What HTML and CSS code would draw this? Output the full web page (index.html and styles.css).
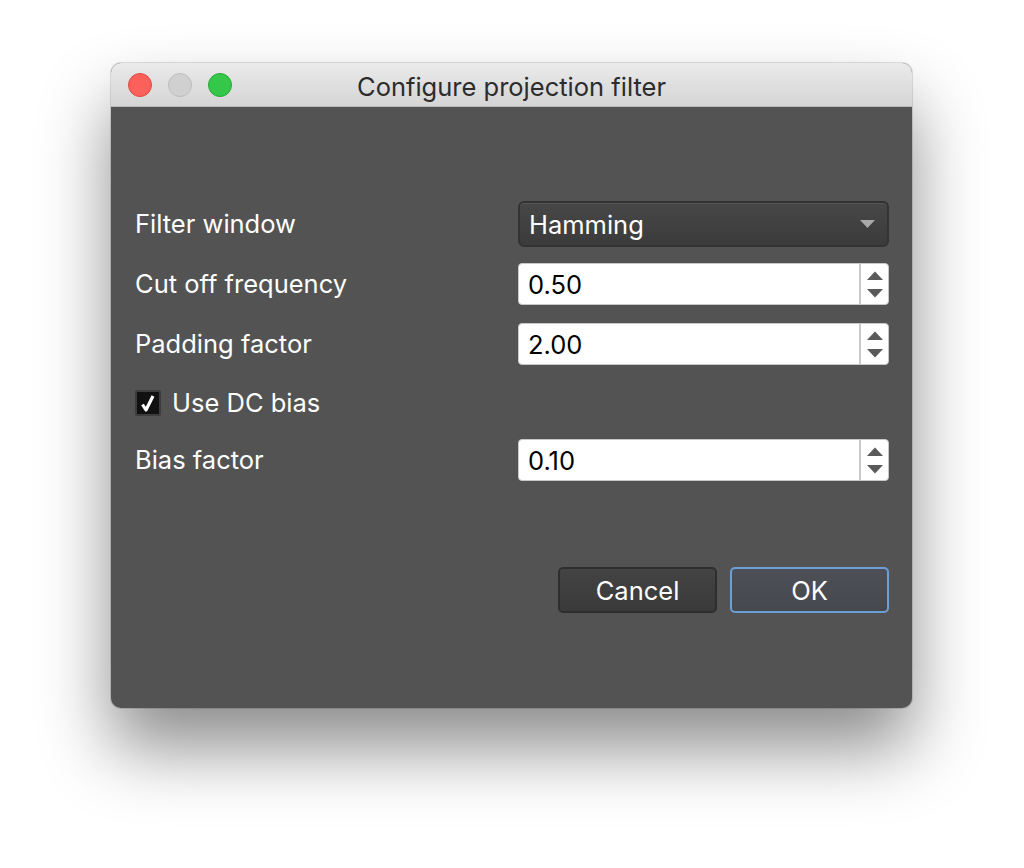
FILE: index.html
```html
<!DOCTYPE html>
<html>
<head>
<meta charset="utf-8">
<link rel="stylesheet" href="styles.css">
</head>
<body>
<div class="window">
  <div class="titlebar">
    <div class="lights">
      <span class="light red"></span>
      <span class="light gray"></span>
      <span class="light green"></span>
    </div>
    <div class="title">Configure projection filter</div>
  </div>
  <div class="content">
    <div class="form">
      <div class="label tall">Filter window</div>
      <div class="combo"><span>Hamming</span><svg class="caret" width="15" height="8" viewBox="0 0 15 8"><path d="M0 0 H15 L7.5 8 Z" fill="#a9a9a9"/></svg></div>

      <div class="label">Cut off frequency</div>
      <div class="spin"><span class="val">0.50</span><span class="arrows"><svg width="18" height="27" viewBox="0 0 18 27"><path d="M1 9 L9 0.5 L17 9 Z M1 18 H17 L9 26.5 Z" fill="#5a5a5a"/></svg></span></div>

      <div class="label">Padding factor</div>
      <div class="spin"><span class="val">2.00</span><span class="arrows"><svg width="18" height="27" viewBox="0 0 18 27"><path d="M1 9 L9 0.5 L17 9 Z M1 18 H17 L9 26.5 Z" fill="#5a5a5a"/></svg></span></div>

      <div class="check-row"><span class="box"><svg width="16" height="18" viewBox="0 0 16 18"><path d="M2.5 10.5 L6 16 L13 2" fill="none" stroke="#fff" stroke-width="3.2" stroke-linejoin="round"/></svg></span><span class="label">Use DC bias</span></div>

      <div class="label">Bias factor</div>
      <div class="spin"><span class="val">0.10</span><span class="arrows"><svg width="18" height="27" viewBox="0 0 18 27"><path d="M1 9 L9 0.5 L17 9 Z M1 18 H17 L9 26.5 Z" fill="#5a5a5a"/></svg></span></div>
    </div>
    <div class="buttons">
      <button class="btn">Cancel</button>
      <button class="btn default">OK</button>
    </div>
  </div>
</div>
</body>
</html>
```

FILE: styles.css
```css
html, body {
  margin: 0;
  padding: 0;
  background: #ffffff;
  width: 1024px;
  height: 868px;
  overflow: hidden;
}
body {
  font-family: "Inter", "Liberation Sans", sans-serif;
}
.window {
  margin: 63px 0 0 111px;
  width: 801px;
  height: 645px;
  border-radius: 10px;
  background: #535353;
  box-shadow: 0 40px 70px rgba(0,0,0,0.45), 0 0 0 1px rgba(0,0,0,0.12);
  display: flex;
  flex-direction: column;
  overflow: hidden;
}
.titlebar {
  height: 44px;
  background: linear-gradient(#ebeaeb, #d6d5d6);
  border-bottom: 1px solid #b9b8b9;
  box-sizing: border-box;
  display: flex;
  align-items: center;
  position: relative;
}
.lights {
  display: flex;
  gap: 16px;
  padding-left: 17px;
}
.light {
  width: 24px;
  height: 24px;
  border-radius: 50%;
  box-sizing: border-box;
}
.red { background: #fc605b; border: 1px solid #de4a45; }
.gray { background: #d0d0d0; border: 1px solid #bcbcbc; }
.green { background: #34c749; border: 1px solid #26a934; }
.title {
  position: absolute;
  left: 0;
  right: 0;
  top: 3px;
  bottom: 0;
  display: flex;
  align-items: center;
  justify-content: center;
  font-size: 25.5px;
  color: #2c2c2c;
}
.content {
  flex: 1;
  padding: 94px 23px 0 24px;
  display: flex;
  flex-direction: column;
}
.form {
  display: grid;
  grid-template-columns: 1fr 371px;
  grid-template-rows: 46px 58px 60px 51px 65px;
  align-items: end;
}
.label {
  color: #ffffff;
  font-size: 25.5px;
  line-height: 42px;
  height: 42px;
}
.label.tall {
  line-height: 46px;
  height: 46px;
}
.combo {
  height: 46px;
  box-sizing: border-box;
  border: 2px solid #333;
  border-radius: 6px;
  background: linear-gradient(#474747, #3b3b3b);
  box-shadow: inset 0 1px 0 rgba(255,255,255,0.08);
  display: flex;
  align-items: center;
  justify-content: space-between;
  padding: 0 12px 0 9px;
  color: #fff;
  font-size: 25.5px;
}
.spin {
  height: 42px;
  box-sizing: border-box;
  background: #fff;
  border: 1px solid #c8c8c8;
  border-radius: 4px;
  display: flex;
  align-items: center;
  font-size: 25.5px;
  color: #000;
}
.val {
  flex: 1;
  padding-left: 9px;
}
.arrows {
  width: 29px;
  height: 100%;
  border-left: 2px solid #c9c9c9;
  box-sizing: border-box;
  display: flex;
  align-items: center;
  justify-content: center;
}
.check-row {
  grid-column: 1 / 3;
  display: flex;
  align-items: center;
  gap: 11px;
  height: 26px;
}
.check-row .label {
  line-height: 26px;
  height: 26px;
}
.box {
  width: 26px;
  height: 26px;
  box-sizing: border-box;
  background: #111;
  border: 2px solid #3d3d3d;
  border-radius: 2px;
  display: flex;
  align-items: center;
  justify-content: center;
}
.buttons {
  margin-top: 86px;
  display: flex;
  justify-content: flex-end;
  gap: 13px;
}
.btn {
  width: 159px;
  height: 46px;
  box-sizing: border-box;
  border-radius: 5px;
  border: 2px solid #2e2e2e;
  background: linear-gradient(#434343, #3a3a3a);
  color: #fff;
  font-family: "Inter", "Liberation Sans", sans-serif;
  font-size: 25.5px;
  padding: 0;
}
.btn.default {
  border-color: #6c9fd6;
  background: linear-gradient(#4d5056, #45484d);
}
```
